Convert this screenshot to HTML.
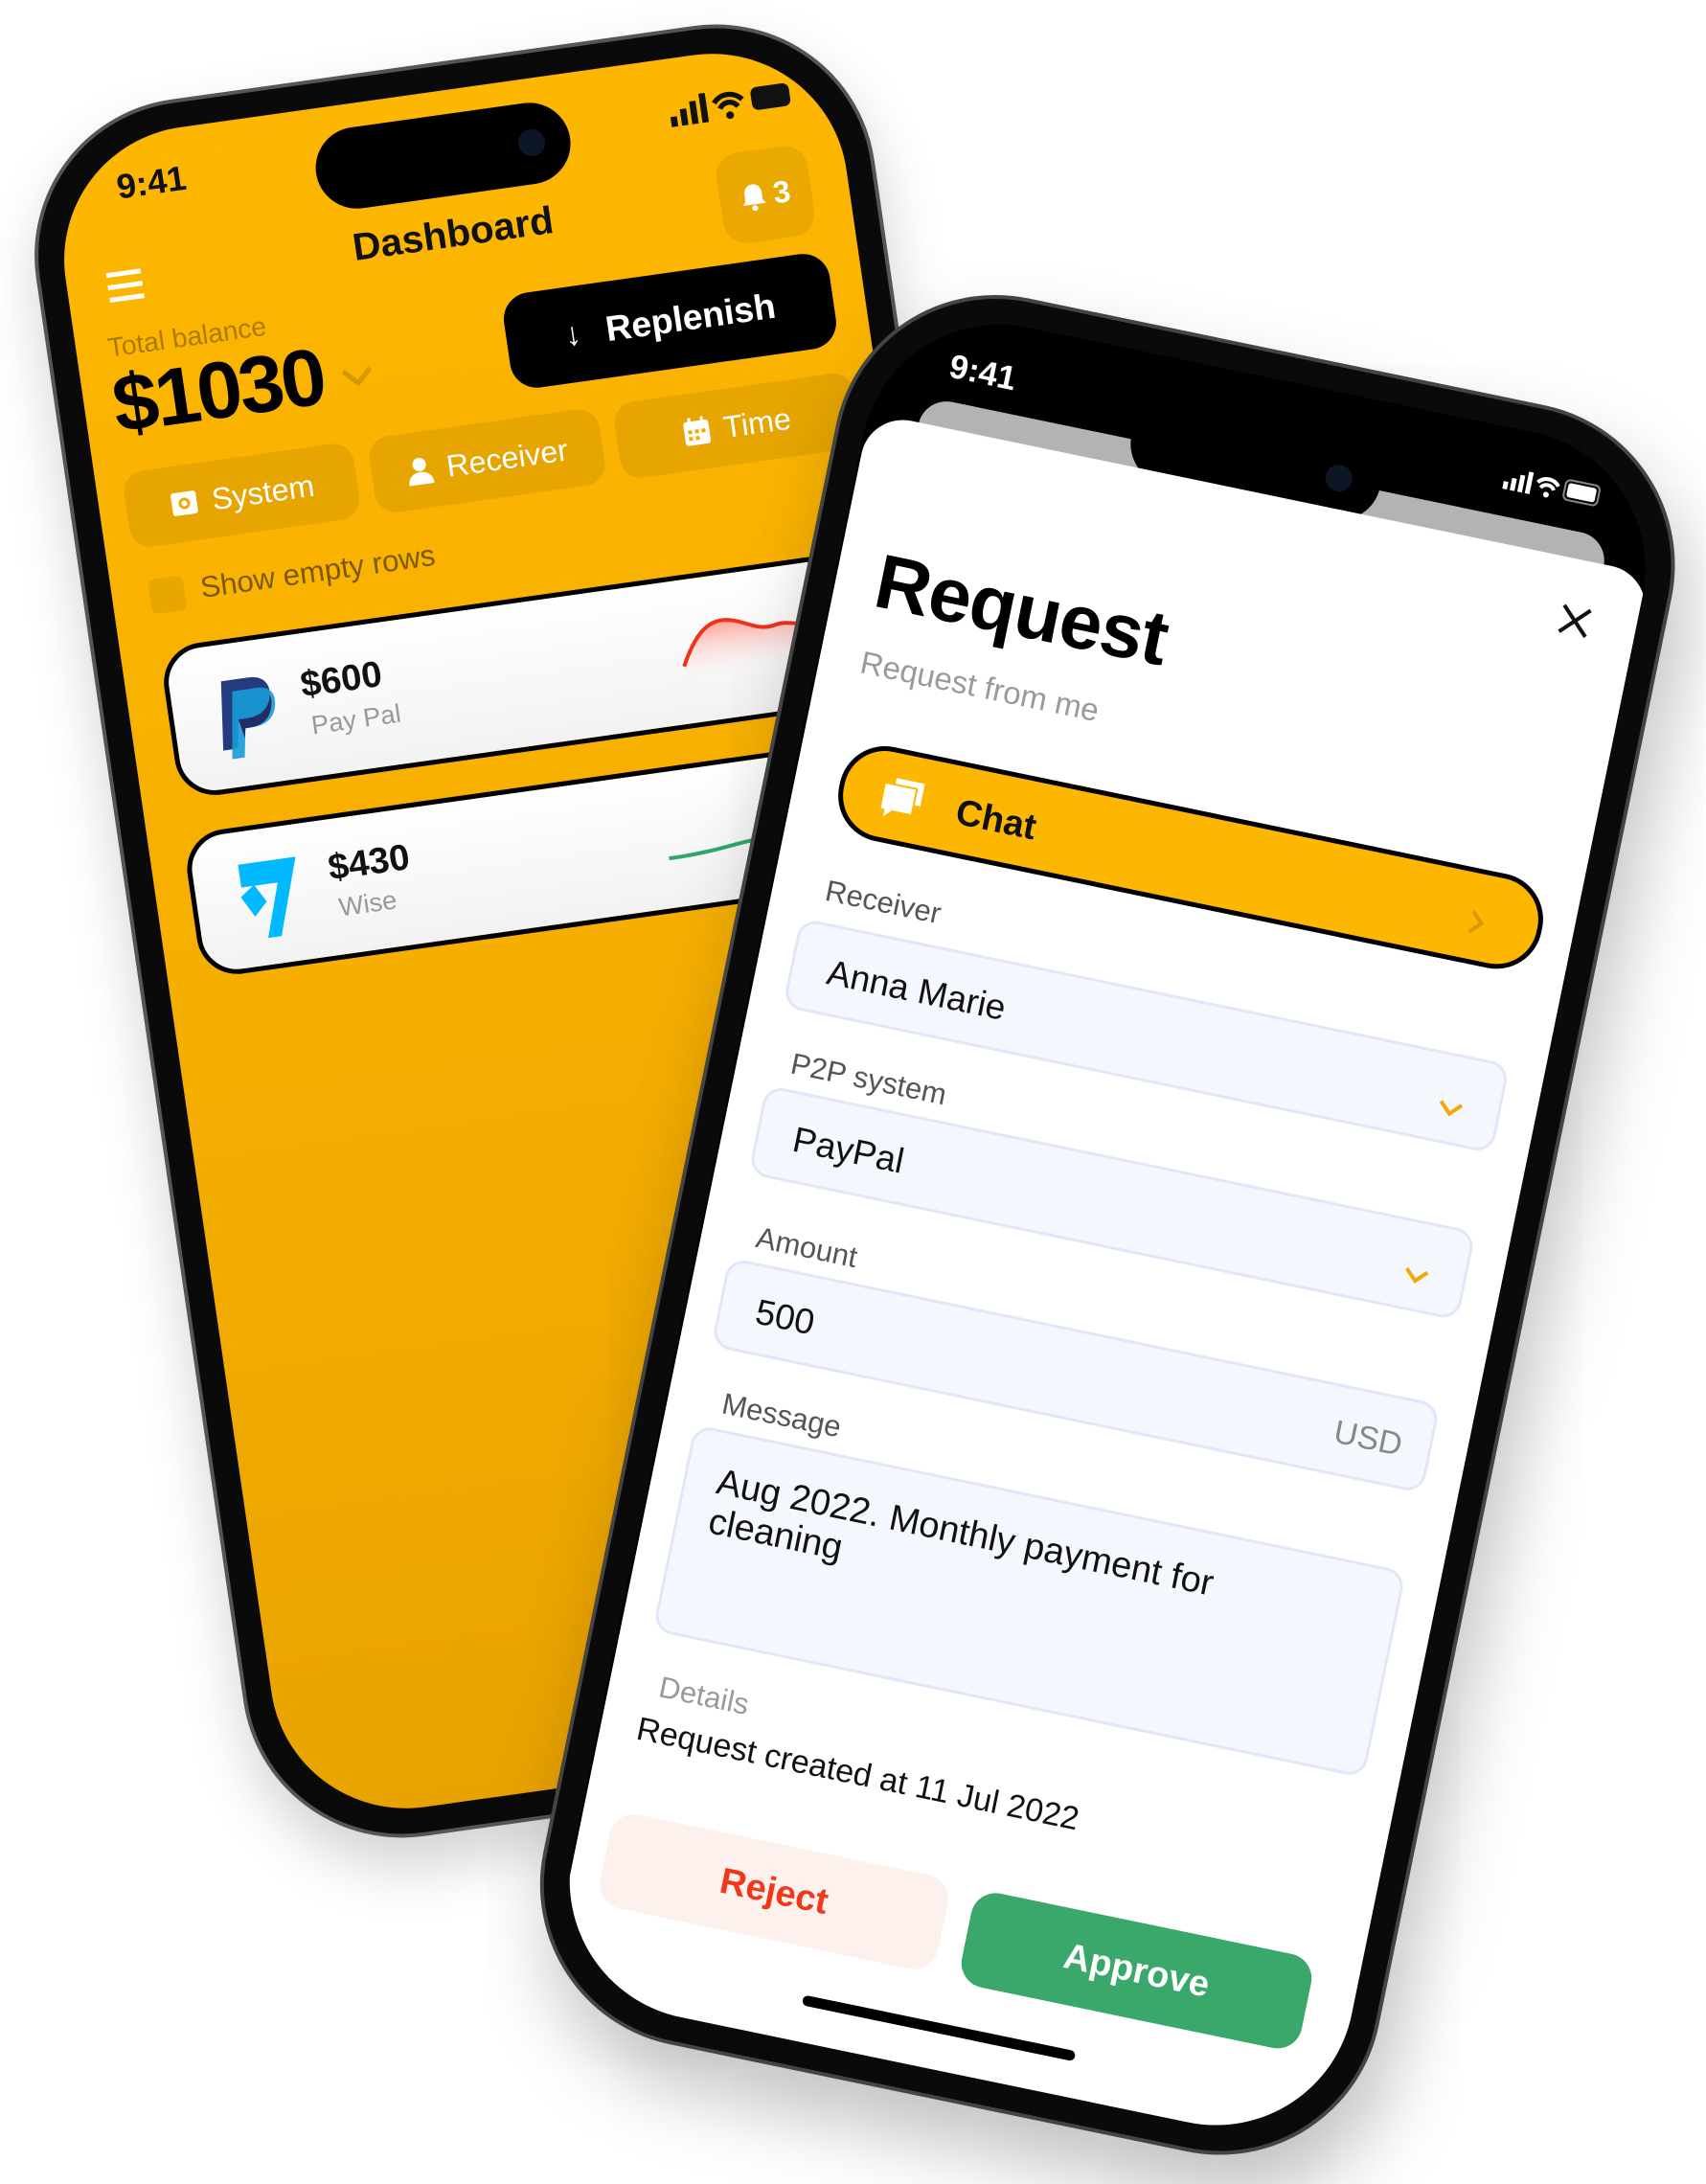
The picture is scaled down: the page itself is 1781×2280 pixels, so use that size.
<!DOCTYPE html>
<html><head><meta charset="utf-8">
<style>
*{margin:0;padding:0;box-sizing:border-box}
html,body{width:1781px;height:2265px;background:#fff;overflow:hidden;font-family:"Liberation Sans",sans-serif}
.ph{position:absolute;left:0;top:0;transform-origin:0 0;background:#0a0a0a;border:4px solid #555;}
.abs{position:absolute}
.scr{position:absolute;overflow:hidden}
</style></head><body>

<!-- LEFT PHONE -->
<div class="ph" style="width:875px;height:1830px;border-radius:165px;transform:matrix(1,-0.1406,0.1443,0.9907,14,127);box-shadow:0 30px 60px rgba(0,0,0,.18)">
 <div class="scr" style="left:26px;top:26px;right:26px;bottom:26px;border-radius:140px;background:linear-gradient(180deg,#FDB700 0%,#F6AF00 50%,#E9A300 100%)">
 </div>
 <div class="scr" style="left:26px;top:26px;right:26px;bottom:26px;border-radius:140px;">
  <div style="position:absolute;left:-26px;top:-26px;width:875px;height:1830px">
   <div class="abs" style="left:92px;top:58px;font-size:36px;font-weight:bold;color:#111">9:41</div>
   <div class="abs" style="left:298px;top:51px;width:265px;height:85px;border-radius:43px;background:#000"><div class="abs" style="right:26px;top:28px;width:28px;height:28px;border-radius:50%;background:#0d1624"></div></div>
   <svg class="abs" style="left:668px;top:60px" width="135" height="48" viewBox="0 0 100 36"><rect x="0" y="20" width="5" height="8" fill="#111"/><rect x="8" y="15" width="5" height="13" fill="#111"/><rect x="16" y="10" width="5" height="18" fill="#111"/><rect x="24" y="5" width="5" height="23" fill="#111"/><path d="M35 14a14 14 0 0 1 22 0M39 19a8 8 0 0 1 14 0" stroke="#111" stroke-width="4" fill="none"/><circle cx="46" cy="25" r="3" fill="#111"/><rect x="64" y="6" width="30" height="18" rx="5" fill="#111"/></svg>
   <div class="abs" style="left:707px;top:133px;width:95px;height:95px;border-radius:24px;background:rgba(0,0,0,.07);color:#fff;font-weight:bold;font-size:32px;display:flex;align-items:center;justify-content:center;gap:8px"><svg width="26" height="30" viewBox="0 0 26 30"><path d="M13 2c-6 0-9 5-9 10v7l-3 4h24l-3-4v-7c0-5-3-10-9-10z" fill="#fff"/><circle cx="13" cy="27" r="3" fill="#fff"/></svg>3</div>
   <div class="abs" style="left:0;width:858px;top:154px;text-align:center;font-size:40px;font-weight:bold;color:#111">Dashboard</div>
   <div class="abs" style="left:68px;top:166px;width:36px"><div style="height:5px;background:#fff;margin-bottom:8px"></div><div style="height:5px;background:#fff;margin-bottom:8px"></div><div style="height:5px;background:#fff"></div></div>
   <div class="abs" style="left:59px;top:228px;font-size:28px;color:rgba(0,0,0,.32)">Total balance</div>
   <div class="abs" style="left:56px;top:255px;font-size:84px;font-weight:bold;color:#000;letter-spacing:-3px">$1030</div>
   <svg class="abs" style="left:292px;top:298px" width="36" height="24"><path d="M4 4l14 14 14-14" stroke="rgba(0,0,0,.15)" stroke-width="5" fill="none"/></svg>
   <div class="abs" style="left:468px;top:247px;width:340px;height:100px;border-radius:28px;background:#000;color:#fff;font-weight:bold;font-size:37px;display:flex;align-items:center;justify-content:center;gap:26px"><span style="font-weight:normal;font-size:34px">↓</span>Replenish</div>
   <div class="abs" style="left:54px;top:375px;width:240px;height:80px;border-radius:22px;background:rgba(0,0,0,.08);color:#fff;font-size:32px;display:flex;align-items:center;justify-content:center;gap:14px"><svg width="30" height="28"><rect x="2" y="2" width="26" height="24" rx="3" fill="#fff"/><circle cx="15" cy="14" r="6" fill="#F0AB00"/><circle cx="15" cy="14" r="3" fill="#fff"/></svg>System</div>
   <div class="abs" style="left:310px;top:375px;width:240px;height:80px;border-radius:22px;background:rgba(0,0,0,.08);color:#fff;font-size:32px;display:flex;align-items:center;justify-content:center;gap:14px"><svg width="28" height="30"><circle cx="14" cy="9" r="7" fill="#fff"/><path d="M1 30c0-9 6-13 13-13s13 4 13 13z" fill="#fff"/></svg>Receiver</div>
   <div class="abs" style="left:566px;top:375px;width:250px;height:80px;border-radius:22px;background:rgba(0,0,0,.08);color:#fff;font-size:32px;display:flex;align-items:center;justify-content:center;gap:14px"><svg width="28" height="30"><rect x="1" y="4" width="26" height="25" rx="3" fill="#fff"/><rect x="6" y="0" width="3" height="7" fill="#fff"/><rect x="19" y="0" width="3" height="7" fill="#fff"/><g fill="#F0AB00"><rect x="5" y="13" width="4" height="4"/><rect x="12" y="13" width="4" height="4"/><rect x="19" y="13" width="4" height="4"/><rect x="5" y="20" width="4" height="4"/><rect x="12" y="20" width="4" height="4"/></g></svg>Time</div>
   <div class="abs" style="left:65px;top:489px;width:36px;height:36px;border-radius:6px;background:rgba(0,0,0,.07)"></div>
   <div class="abs" style="left:118px;top:487px;font-size:31px;color:rgba(0,0,0,.5)">Show empty rows</div>
   <div class="abs" style="left:66px;top:561px;width:820px;height:160px;border-radius:42px;border:5px solid #000;background:linear-gradient(180deg,#fff,#f2f2f2);overflow:hidden">
    <svg class="abs" style="left:40px;top:38px" width="70" height="84" viewBox="0 0 70 84"><path d="M14 0h28c14 0 22 8 20 21-2 15-13 22-27 22H26l-5 29H6z" fill="#253B80"/><path d="M24 12h26c12 0 18 7 16 19-2 14-12 21-26 21H32l-5 30H14z" fill="#179BD7" opacity=".9"/><path d="M26 42h9c14 0 25-7 27-22 1 6 1 10 0 11-2 14-12 21-26 21H32l-2 10z" fill="#222D65"/></svg>
    <div class="abs" style="left:135px;top:33px;font-size:38px;font-weight:bold;color:#111">$600</div>
    <div class="abs" style="left:140px;top:82px;font-size:27px;color:#999">Pay Pal</div>
    <svg class="abs" style="left:520px;top:20px" width="300" height="90"><defs><linearGradient id="rg" x1="0" y1="0" x2="0" y2="1"><stop offset="0" stop-color="#ff6a55" stop-opacity=".6"/><stop offset="1" stop-color="#fff" stop-opacity="0"/></linearGradient></defs><path d="M10 70C25 40 40 25 60 28S90 45 110 40 150 60 300 50V90H10z" fill="url(#rg)"/><path d="M10 70C25 40 40 25 60 28S90 45 110 40 150 60 300 50" stroke="#f0321a" stroke-width="4" fill="none"/></svg>
   </div>
   <div class="abs" style="left:62px;top:757px;width:820px;height:152px;border-radius:42px;border:5px solid #000;background:linear-gradient(180deg,#fff,#f2f2f2);overflow:hidden">
    <svg class="abs" style="left:42px;top:32px" width="70" height="84" viewBox="0 0 70 84"><path d="M6 2h60L40 82H26l18-56H20l10 18-14 14L4 36 18 26H6z" fill="#00B9FF"/></svg>
    <div class="abs" style="left:140px;top:30px;font-size:38px;font-weight:bold;color:#111">$430</div>
    <div class="abs" style="left:145px;top:78px;font-size:27px;color:#999">Wise</div>
    <svg class="abs" style="left:480px;top:60px" width="300" height="40"><path d="M10 30C50 30 70 26 90 24S200 10 300 8" stroke="#2fa86a" stroke-width="4" fill="none"/></svg>
   </div>
  </div>
 </div>
</div>

<!-- RIGHT PHONE -->
<div class="ph" style="width:890px;height:1860px;border-radius:170px;transform:matrix(0.98,0.203,-0.201,0.98,907,277);box-shadow:20px 40px 80px rgba(0,0,0,.25);border-color:#444">
 <div class="scr" style="left:26px;top:26px;right:26px;bottom:26px;border-radius:145px;background:#000">
  <div style="position:absolute;left:-26px;top:-26px;width:890px;height:1860px">
   <div class="abs" style="left:100px;top:62px;font-size:35px;font-weight:bold;color:#fff">9:41</div>
   <svg class="abs" style="left:690px;top:62px" width="110" height="36" viewBox="0 0 110 36"><rect x="0" y="20" width="5" height="8" fill="#fff"/><rect x="8" y="15" width="5" height="13" fill="#fff"/><rect x="16" y="10" width="5" height="18" fill="#fff"/><rect x="24" y="5" width="5" height="23" fill="#fff"/><path d="M35 14a14 14 0 0 1 22 0M39 19a8 8 0 0 1 14 0" stroke="#fff" stroke-width="4" fill="none"/><circle cx="46" cy="25" r="3" fill="#fff"/><rect x="64" y="5" width="36" height="21" rx="5" fill="none" stroke="#888" stroke-width="2"/><rect x="67" y="8" width="30" height="15" rx="3" fill="#fff"/></svg>
   <div class="abs" style="left:80px;top:118px;width:730px;height:80px;border-radius:30px;background:#b3b3b3"></div>
   <div class="abs" style="left:300px;top:70px;width:265px;height:88px;border-radius:44px;background:#000"><div class="abs" style="right:30px;top:30px;width:28px;height:28px;border-radius:50%;background:#0d1624"></div></div>
   <div class="abs" style="left:28px;top:146px;width:834px;height:1690px;border-radius:44px;background:#fff">
    <div style="position:absolute;left:-28px;top:-146px;width:890px;height:1860px">
     <svg class="abs" style="left:772px;top:190px" width="40" height="40"><path d="M6 6l28 28M34 6L6 34" stroke="#111" stroke-width="4"/></svg>
     <div class="abs" style="left:70px;top:270px;font-size:80px;font-weight:bold;color:#000;letter-spacing:-1px">Request</div>
     <div class="abs" style="left:71px;top:384px;font-size:33px;color:#9a9a9a">Request from me</div>
     <div class="abs" style="left:75px;top:483px;width:748px;height:100px;border-radius:48px;border:5px solid #000;background:#FDB700">
      <svg class="abs" style="left:38px;top:24px" width="50" height="46" viewBox="0 0 50 46"><path d="M14 2h30v24h-6V8H14z" fill="#fff"/><path d="M4 10h32v26H16l-8 8v-8H4z" fill="#fff"/></svg>
      <div class="abs" style="left:120px;top:27px;font-size:38px;font-weight:bold;color:#111">Chat</div>
      <svg class="abs" style="left:665px;top:36px" width="20" height="30"><path d="M4 4l11 11L4 26" stroke="#d89a00" stroke-width="4" fill="none"/></svg>
     </div>
     <div class="abs" style="left:83px;top:626px;font-size:31px;color:#555">Receiver</div>
     <div class="abs" style="left:63px;top:677px;width:756px;height:95px;border-radius:20px;background:#F5F7FE;border:3px solid #E2E7F8">
      <div class="abs" style="left:36px;top:26px;font-size:37px;color:#111">Anna Marie</div>
      <svg class="abs" style="left:686px;top:45px" width="30" height="20"><path d="M4 4l11 11L26 4" stroke="#F5A800" stroke-width="4" fill="none"/></svg>
     </div>
     <div class="abs" style="left:84px;top:810px;font-size:31px;color:#555">P2P system</div>
     <div class="abs" style="left:63px;top:855px;width:756px;height:95px;border-radius:20px;background:#F5F7FE;border:3px solid #E2E7F8">
      <div class="abs" style="left:36px;top:26px;font-size:37px;color:#111">PayPal</div>
      <svg class="abs" style="left:686px;top:45px" width="30" height="20"><path d="M4 4l11 11L26 4" stroke="#F5A800" stroke-width="4" fill="none"/></svg>
     </div>
     <div class="abs" style="left:85px;top:995px;font-size:31px;color:#555">Amount</div>
     <div class="abs" style="left:61px;top:1039px;width:758px;height:95px;border-radius:20px;background:#F5F7FE;border:3px solid #E2E7F8">
      <div class="abs" style="left:36px;top:26px;font-size:37px;color:#111">500</div>
      <div class="abs" style="right:28px;top:28px;font-size:34px;color:#888">USD</div>
     </div>
     <div class="abs" style="left:85px;top:1172px;font-size:31px;color:#555">Message</div>
     <div class="abs" style="left:61px;top:1217px;width:758px;height:220px;border-radius:20px;background:#F5F7FE;border:3px solid #E2E7F8">
      <div class="abs" style="left:32px;top:30px;font-size:38px;line-height:42px;color:#111;width:600px">Aug 2022. Monthly payment for cleaning</div>
     </div>
     <div class="abs" style="left:80px;top:1475px;font-size:31px;color:#999">Details</div>
     <div class="abs" style="left:66px;top:1521px;font-size:34px;color:#111">Request created at 11 Jul 2022</div>
     <div class="abs" style="left:60px;top:1628px;width:360px;height:100px;border-radius:26px;background:#FDF1EE;color:#F2381A;font-weight:bold;font-size:38px;display:flex;align-items:center;justify-content:center">Reject</div>
     <div class="abs" style="left:446px;top:1632px;width:362px;height:100px;border-radius:26px;background:#3AA86B;color:#fff;font-weight:bold;font-size:38px;display:flex;align-items:center;justify-content:center">Approve</div>
     <div class="abs" style="left:292px;top:1777px;width:290px;height:11px;border-radius:6px;background:#000"></div>
    </div>
   </div>
  </div>
 </div>
</div>
</body></html>
